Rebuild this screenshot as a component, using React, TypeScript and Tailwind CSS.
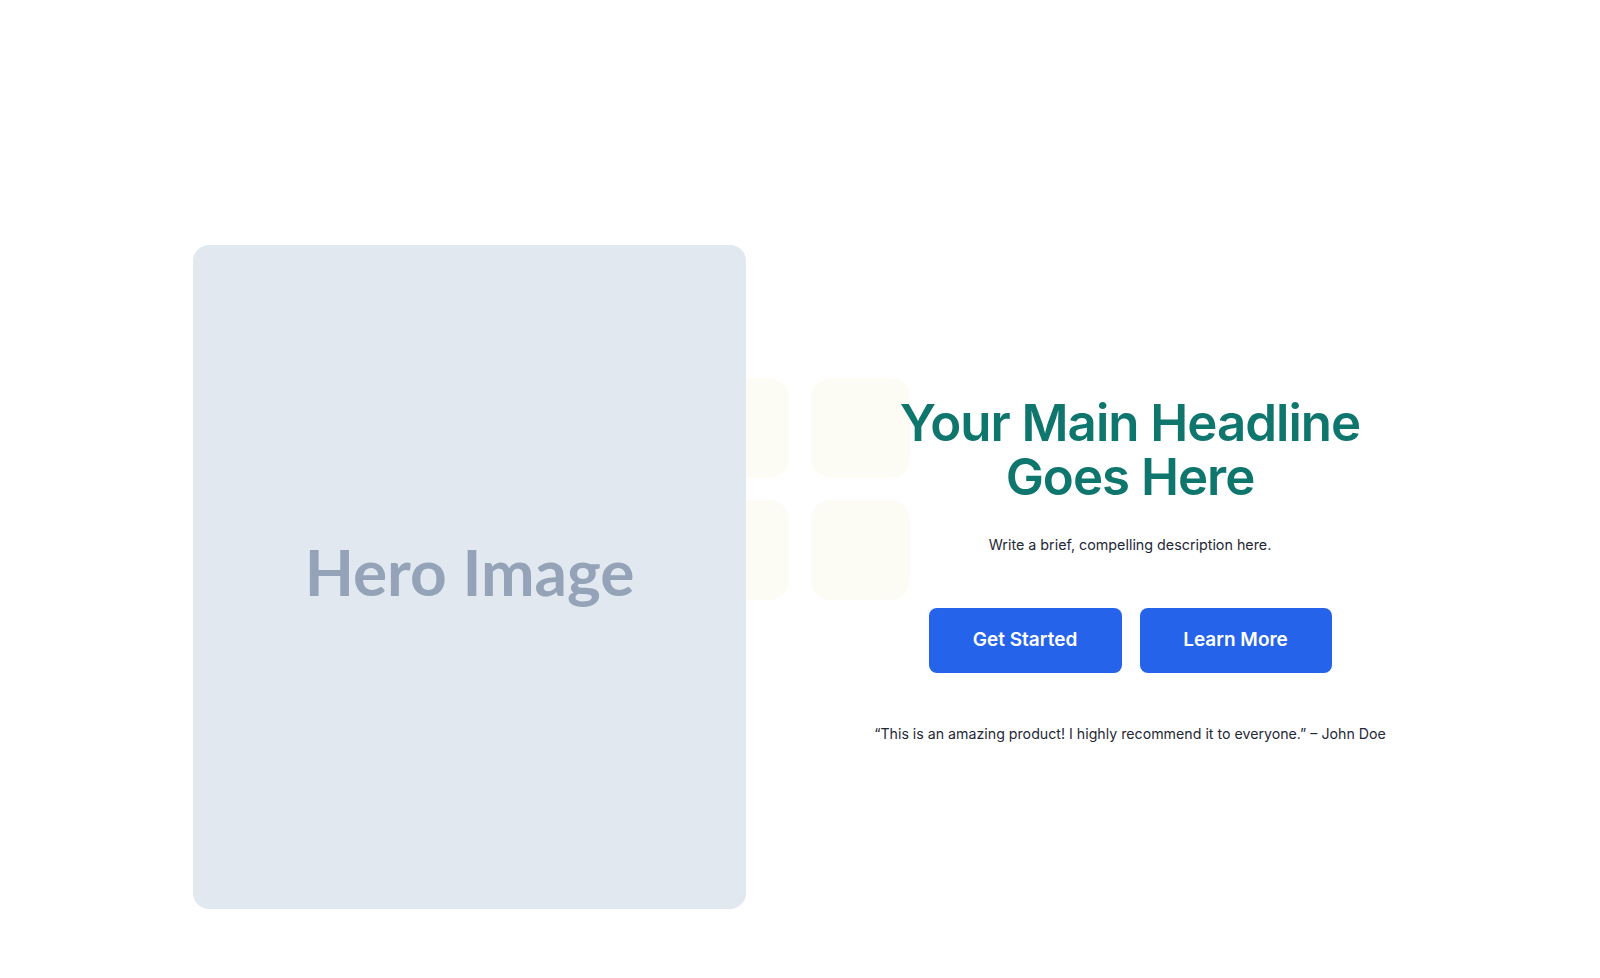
export default function App() {
  return (
    <div className="w-full min-h-screen bg-white" style={{ fontFamily: "Inter, 'Noto Sans', sans-serif" }}>
      <section className="relative flex items-start pt-[245px] pl-[193px] pb-[69px]">
        {/* faint decorative tiles behind the hero */}
        <div className="absolute left-[690px] top-[378px] grid grid-cols-2 gap-[22px]">
          <div className="w-[99px] h-[100px] rounded-[20px] bg-[#fcfbf4]" />
          <div className="w-[99px] h-[100px] rounded-[20px] bg-[#fcfbf4]" />
          <div className="w-[99px] h-[100px] rounded-[20px] bg-[#fcfbf4]" />
          <div className="w-[99px] h-[100px] rounded-[20px] bg-[#fcfbf4]" />
        </div>

        <div className="relative z-10 w-[553px] h-[664px] rounded-2xl bg-[#e2e8f0] flex items-center justify-center">
          <span className="mb-[10px] text-[64px] font-bold text-[#94a3b8]" style={{ fontFamily: "Lato, sans-serif" }}>
            Hero Image
          </span>
        </div>

        <div className="relative z-10 ml-[104px] w-[560px] pt-[151px] flex flex-col items-center text-center">
          <h1 className="text-[51px] leading-[54px] font-semibold tracking-[-1px] text-[#0f766e]">
            Your Main Headline
            <br />
            Goes Here
          </h1>
          <p className="mt-[29px] text-[14.3px] leading-6 text-[#1f2937]">
            Write a brief, compelling description here.
          </p>
          <div className="mt-[51px] flex gap-[18px]">
            <button className="w-[193px] h-[65px] rounded-lg bg-[#2563eb] text-white text-[19px] font-semibold">
              Get Started
            </button>
            <button className="w-[192px] h-[65px] rounded-lg bg-[#2563eb] text-white text-[19px] font-semibold">
              Learn More
            </button>
          </div>
          <p className="mt-[49px] text-[14.2px] leading-6 text-[#1f2937] whitespace-nowrap">
            “This is an amazing product! I highly recommend it to everyone.” – John Doe
          </p>
        </div>
      </section>
    </div>
  );
}
